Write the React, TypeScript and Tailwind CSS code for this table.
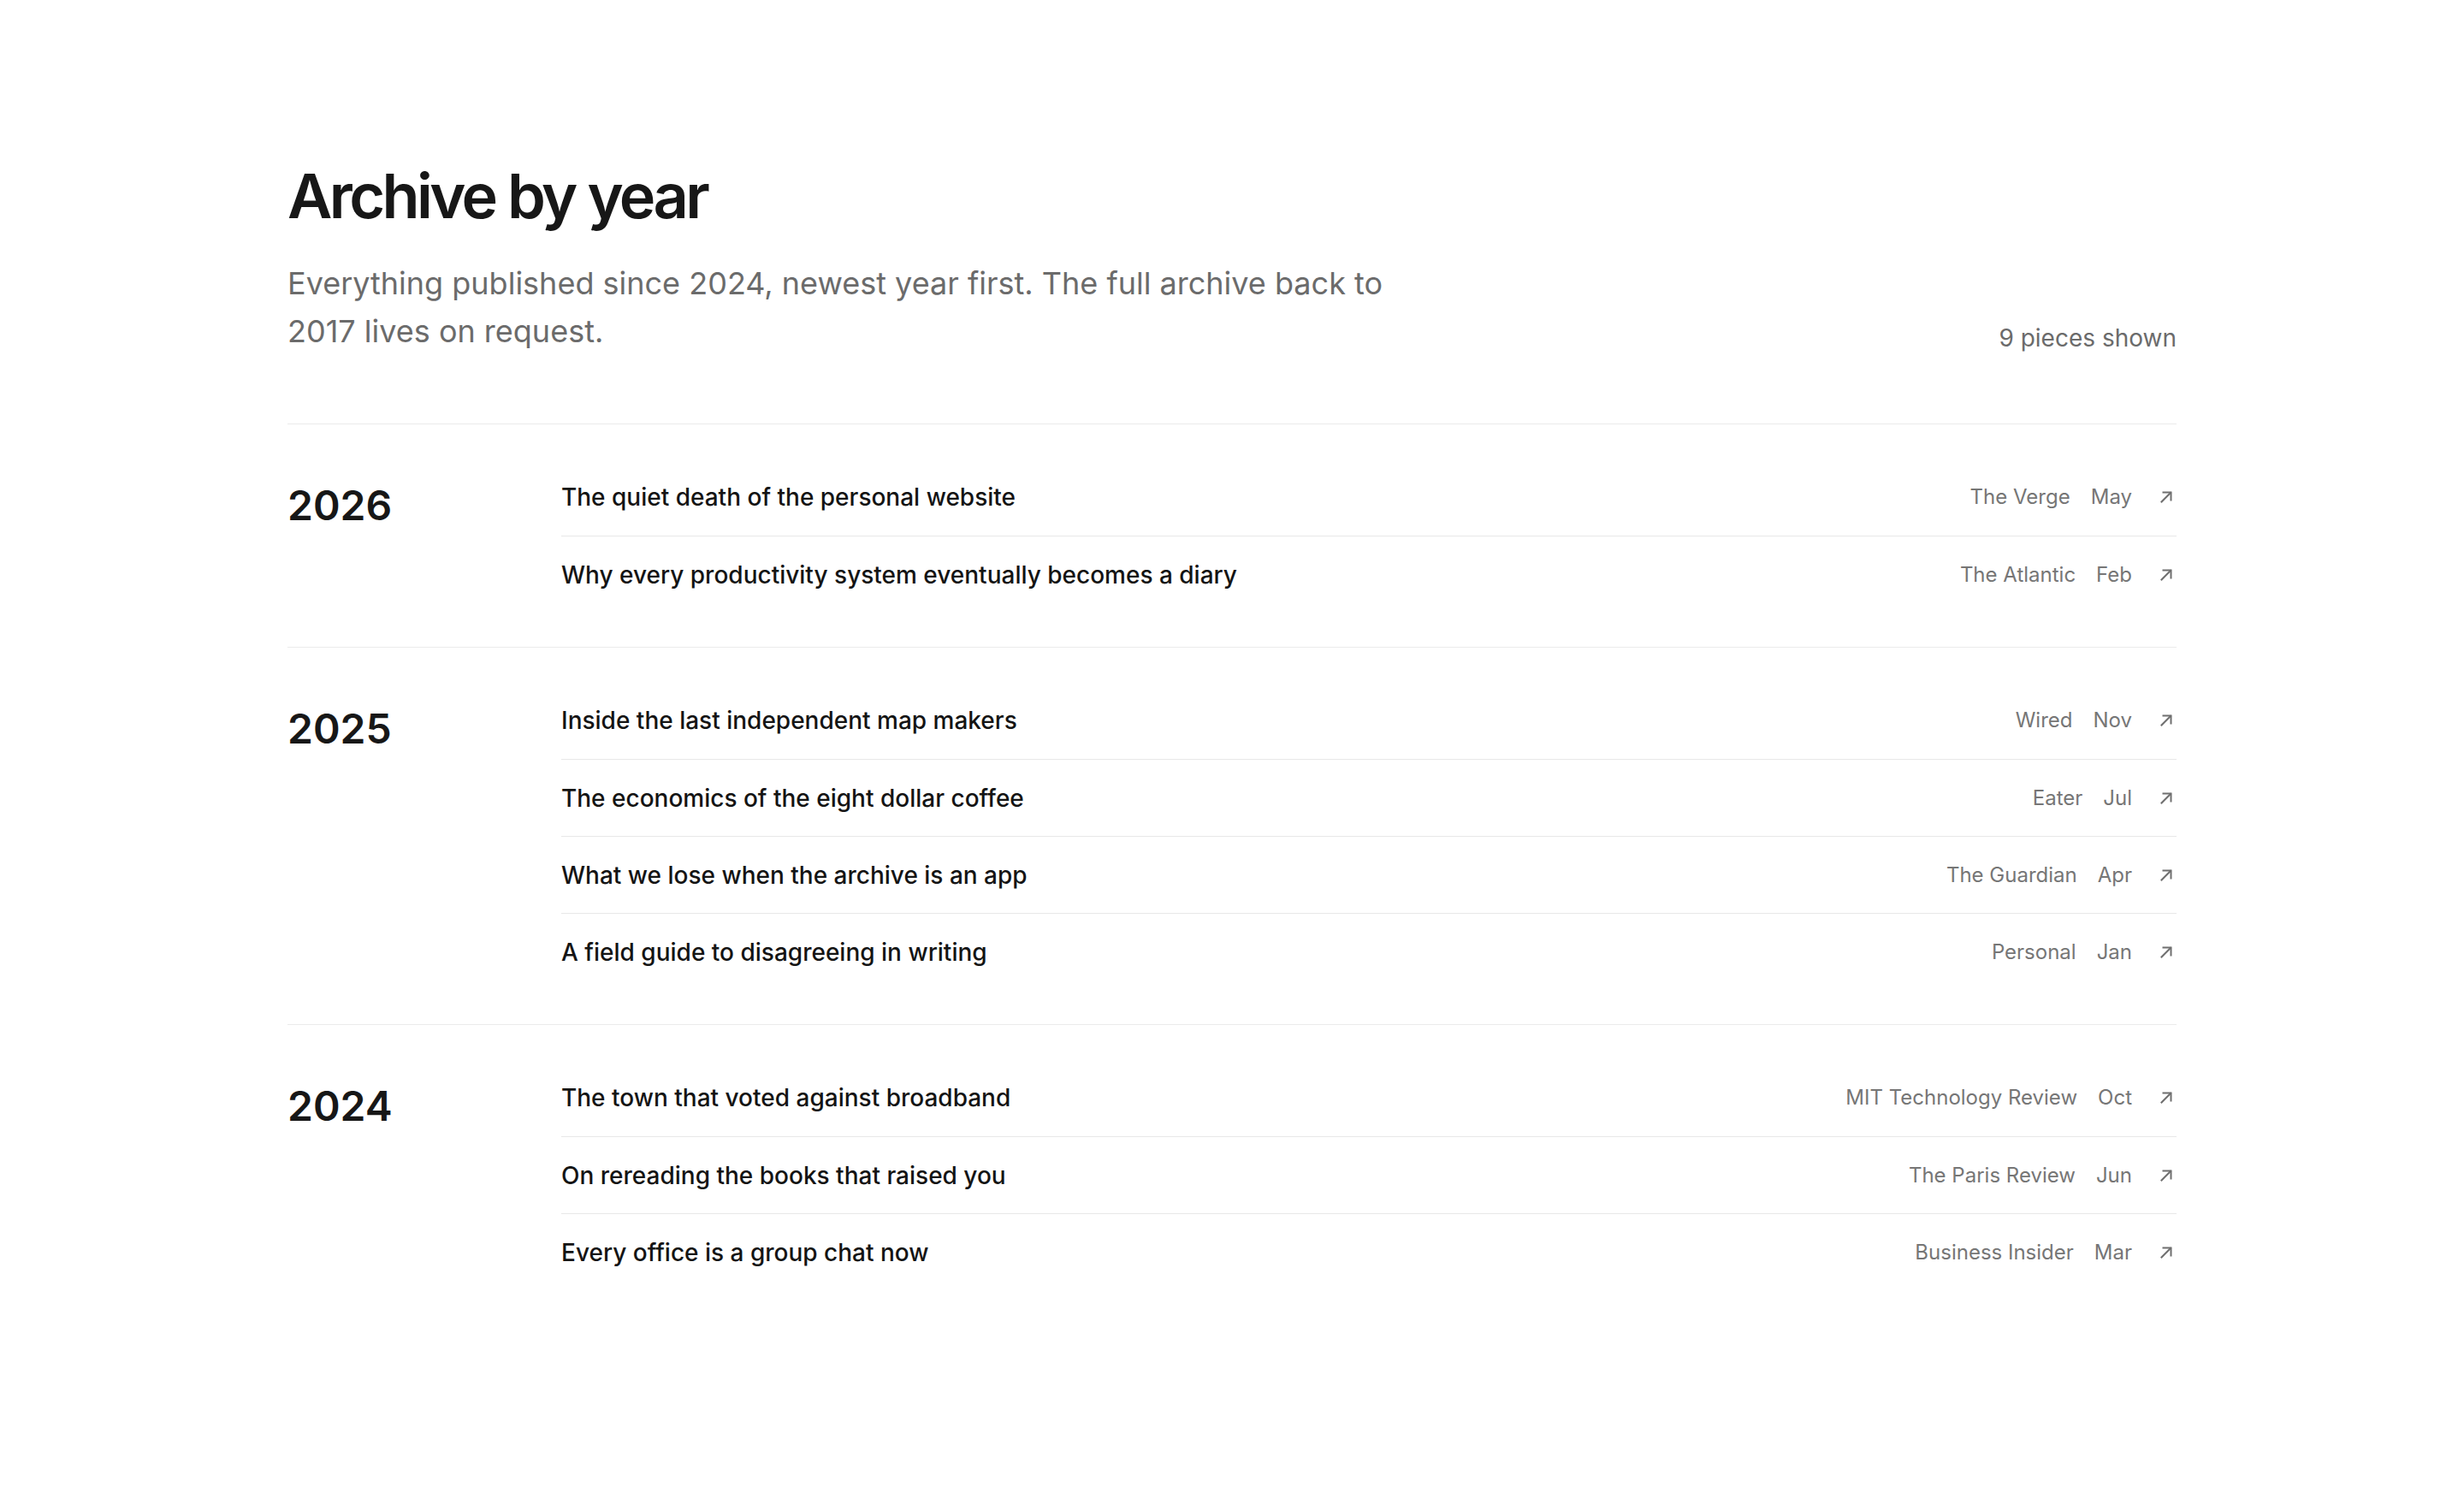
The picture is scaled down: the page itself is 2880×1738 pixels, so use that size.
const archive = [
  {
    year: "2026",
    items: [
      { title: "The quiet death of the personal website", source: "The Verge", month: "May" },
      { title: "Why every productivity system eventually becomes a diary", source: "The Atlantic", month: "Feb" },
    ],
  },
  {
    year: "2025",
    items: [
      { title: "Inside the last independent map makers", source: "Wired", month: "Nov" },
      { title: "The economics of the eight dollar coffee", source: "Eater", month: "Jul" },
      { title: "What we lose when the archive is an app", source: "The Guardian", month: "Apr" },
      { title: "A field guide to disagreeing in writing", source: "Personal", month: "Jan" },
    ],
  },
  {
    year: "2024",
    items: [
      { title: "The town that voted against broadband", source: "MIT Technology Review", month: "Oct" },
      { title: "On rereading the books that raised you", source: "The Paris Review", month: "Jun" },
      { title: "Every office is a group chat now", source: "Business Insider", month: "Mar" },
    ],
  },
];

const ArrowIcon = () => (
  <svg width="16" height="16" viewBox="0 0 16 16" fill="none" stroke="#6f6f6f" strokeWidth="2" strokeLinecap="square">
    <path d="M2.5 13.5 L13 3" />
    <path d="M4.5 2.5 H13.5 V11.5" />
  </svg>
);

const ArticleRow = ({
  title,
  source,
  month,
  first,
}: {
  title: string;
  source: string;
  month: string;
  first: boolean;
}) => {
  return (
    <a
      href="#"
      className={`flex h-[90px] items-center justify-between ${first ? "" : "border-t border-[#e8e8e8]"}`}
    >
      <p className="text-[28px] font-medium text-[#141414]">{title}</p>
      <div className="flex items-center text-[24px] text-[#767676]">
        <span>{source}</span>
        <span className="ml-6">{month}</span>
        <span className="ml-[28px] flex h-6 w-6 items-center justify-center">
          <ArrowIcon />
        </span>
      </div>
    </a>
  );
};

export default function App() {
  return (
    <div className="min-h-screen bg-white font-['Inter',sans-serif] text-[#1a1a1a]">
      <div className="mx-auto w-[2208px] pt-[189px] pb-[180px]">
        <header className="flex items-end justify-between pb-[80px]">
          <div>
            <h1 className="text-[72px] leading-[79px] font-semibold tracking-[-0.05em] text-[#171717]">
              Archive by year
            </h1>
            <p className="mt-[35px] max-w-[1320px] text-[36px] leading-[56px] text-[#6b6b6b]">
              Everything published since 2024, newest year first. The full archive back to 2017 lives on request.
            </p>
          </div>
          <p className="text-[28px] leading-[40px] text-[#6b6b6b]">9 pieces shown</p>
        </header>

        {archive.map((group) => (
          <section key={group.year} className="flex border-t border-[#ebebeb] py-10">
            <div className="w-[320px] shrink-0 pt-[31px]">
              <h2 className="text-[48px] leading-none font-semibold text-[#171717]">{group.year}</h2>
            </div>
            <div className="flex-1">
              {group.items.map((item, j) => (
                <ArticleRow key={item.title} {...item} first={j === 0} />
              ))}
            </div>
          </section>
        ))}
      </div>
    </div>
  );
}
